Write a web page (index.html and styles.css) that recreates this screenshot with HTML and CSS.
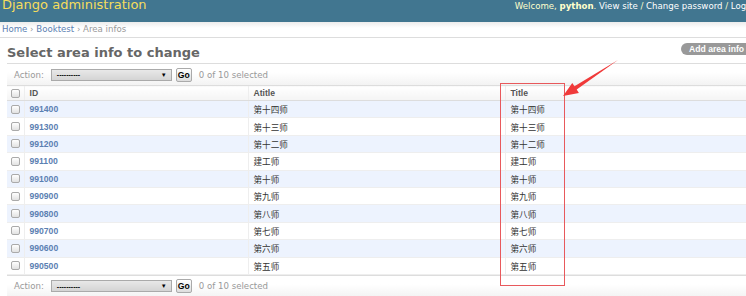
FILE: index.html
```html
<!DOCTYPE html>
<html lang="en">
<head>
  <meta charset="UTF-8" />
  <title>Select area info to change | Django site admin</title>
  <link rel="stylesheet" href="styles.css">
</head>
<body>

  <div class="page">
    <div class="header">
      <h1 class="branding">Django administration</h1>
      <div class="user-tools">
        Welcome, <strong>python</strong>. <a href="#">View site</a> / <a href="#">Change password</a> / <a href="#">Log out</a>
      </div>
    </div>

    <div class="breadcrumbs">
      <a href="#">Home</a> › <a href="#">Booktest</a> › Area infos
    </div>

    <div class="title-row">
      <h1 class="page-title">Select area info to change</h1>
      <a class="addlink" href="#">Add area info</a>
    </div>

    <div class="changelist">
      <div class="actions">
        <span class="action-label">Action:</span>
        <div class="select"><span>----------</span><span class="select-arrow">▼</span></div>
        <button class="go-btn">Go</button>
        <span class="counter">0 of 10 selected</span>
      </div>

      <table class="result-list">
        <colgroup>
          <col class="col-check">
          <col class="col-id">
          <col class="col-atitle">
          <col>
        </colgroup>
        <thead>
          <tr>
            <th class="check-cell"><span class="check"></span></th>
            <th>ID</th>
            <th>Atitle</th>
            <th>Title</th>
          </tr>
        </thead>
        <tbody>
          <tr><td class="check-cell"><span class="check"></span></td><td><a href="#">991400</a></td><td>第十四师</td><td>第十四师</td></tr>
          <tr><td class="check-cell"><span class="check"></span></td><td><a href="#">991300</a></td><td>第十三师</td><td>第十三师</td></tr>
          <tr><td class="check-cell"><span class="check"></span></td><td><a href="#">991200</a></td><td>第十二师</td><td>第十二师</td></tr>
          <tr><td class="check-cell"><span class="check"></span></td><td><a href="#">991100</a></td><td>建工师</td><td>建工师</td></tr>
          <tr><td class="check-cell"><span class="check"></span></td><td><a href="#">991000</a></td><td>第十师</td><td>第十师</td></tr>
          <tr><td class="check-cell"><span class="check"></span></td><td><a href="#">990900</a></td><td>第九师</td><td>第九师</td></tr>
          <tr><td class="check-cell"><span class="check"></span></td><td><a href="#">990800</a></td><td>第八师</td><td>第八师</td></tr>
          <tr><td class="check-cell"><span class="check"></span></td><td><a href="#">990700</a></td><td>第七师</td><td>第七师</td></tr>
          <tr><td class="check-cell"><span class="check"></span></td><td><a href="#">990600</a></td><td>第六师</td><td>第六师</td></tr>
          <tr><td class="check-cell"><span class="check"></span></td><td><a href="#">990500</a></td><td>第五师</td><td>第五师</td></tr>
        </tbody>
      </table>

      <div class="actions actions-bottom">
        <span class="action-label">Action:</span>
        <div class="select"><span>----------</span><span class="select-arrow">▼</span></div>
        <button class="go-btn">Go</button>
        <span class="counter">0 of 10 selected</span>
      </div>
    </div>

    <!-- annotation over the Title column -->
    <div class="mark-box"></div>
    <svg class="mark-arrow" viewBox="560 58 62 42" width="62" height="42">
      <polygon points="618,60 576.7,89.6 578.9,92.9 563,96 572.3,82.9 574.5,86.2" fill="#f03a3a"/>
    </svg>
  </div>

</body>
</html>
```

FILE: styles.css
```css
/* General */
html, body {
  margin: 0;
  overflow: hidden;
}

body {
  font-family: "DejaVu Sans", Verdana, sans-serif;
  color: #333;
  background: #fff;
}

a {
  color: #5b80b2;
  text-decoration: none;
}

.page {
  position: relative;
  width: 775px;
}

/* Header */
.header {
  display: flex;
  justify-content: space-between;
  align-items: flex-start;
  height: 22px;
  background: #417690;
  overflow: hidden;
}

.branding {
  margin: -3px 0 0 2px;
  font-size: 13px;
  line-height: 16px;
  font-weight: normal;
  color: #f5dd5d;
}

.user-tools {
  margin-right: 12px;
  font-size: 8.6px;
  line-height: 12px;
  color: #ffc;
}

.user-tools a {
  color: #fff;
}

/* Breadcrumbs */
.breadcrumbs {
  height: 15px;
  line-height: 15px;
  padding-left: 2px;
  font-size: 8.6px;
  color: #999;
  background: linear-gradient(#ececec, #fff 40%);
  border-bottom: 1px solid #ddd;
}

/* Title */
.title-row {
  display: flex;
  justify-content: space-between;
  align-items: flex-start;
  height: 25px;
  padding: 0 23px 0 7px;
}

.page-title {
  margin: 7px 0 0;
  font-size: 13px;
  line-height: 16px;
  color: #666;
}

.addlink {
  margin-top: 5px;
  padding: 0 8px;
  height: 12px;
  line-height: 12px;
  border-radius: 6px;
  background: #999;
  color: #fff;
  font: bold 8.6px/12px "Liberation Sans", Arial, sans-serif;
}

/* Change list */
.changelist {
  margin: 0 7px;
}

.actions {
  display: flex;
  align-items: center;
  height: 21px;
  padding-left: 7px;
  border-top: 1px solid #ddd;
  font-size: 8.6px;
  color: #999;
  background: linear-gradient(#fff 40%, #f3f3f3);
}

.action-label {
  margin-right: 7px;
}

.select {
  display: flex;
  justify-content: space-between;
  align-items: center;
  box-sizing: border-box;
  width: 121px;
  height: 12px;
  padding: 0 4px 0 5px;
  border: 1px solid #aaa;
  background: linear-gradient(#e8e8e8, #d4d4d4);
  font: bold 7px "Liberation Sans", Arial, sans-serif;
  color: #000;
}

.select-arrow {
  font-size: 6px;
}

.go-btn {
  box-sizing: border-box;
  width: 16px;
  height: 14px;
  margin-left: 4px;
  padding: 0;
  border: 1px solid #aaa;
  border-radius: 2px;
  background: linear-gradient(#fff, #ddd);
  font: bold 8.6px "Liberation Sans", Arial, sans-serif;
  color: #000;
}

.counter {
  margin-left: 7px;
  color: #999;
}

/* Table */
.result-list {
  width: 100%;
  border-collapse: collapse;
  table-layout: fixed;
  font-family: "Liberation Sans", Arial, "Noto Sans CJK SC", sans-serif;
  font-size: 8.6px;
}

.col-check { width: 17px; }
.col-id { width: 224px; }
.col-atitle { width: 257px; }

.result-list th {
  height: 14px;
  padding: 0 5px;
  text-align: left;
  font-weight: bold;
  color: #555;
  border-top: 1px solid #ddd;
  border-bottom: 1px solid #ddd;
  border-left: 1px solid #eee;
  background: linear-gradient(#fff, #f4f4f4);
}

.result-list td {
  height: 16.4px;
  padding: 0 5px;
  border-bottom: 1px solid #eee;
  border-left: 1px solid #eee;
}

.result-list tbody tr:nth-child(odd) td {
  background: #edf3fe;
}

.result-list td a {
  font-weight: bold;
}

.result-list .check-cell {
  padding: 0 0 0 4px;
  border-left: none;
}

.check {
  display: block;
  width: 7px;
  height: 7px;
  border: 1px solid #aaa;
  border-radius: 2px;
  background: linear-gradient(#fff, #e2e2e2);
}

.actions-bottom {
  border-top: 1px solid #ddd;
}

/* Annotation */
.mark-box {
  position: absolute;
  left: 500px;
  top: 83px;
  width: 63px;
  height: 201px;
  border: 1.5px solid #e8595c;
}

.mark-arrow {
  position: absolute;
  left: 560px;
  top: 58px;
}
```
